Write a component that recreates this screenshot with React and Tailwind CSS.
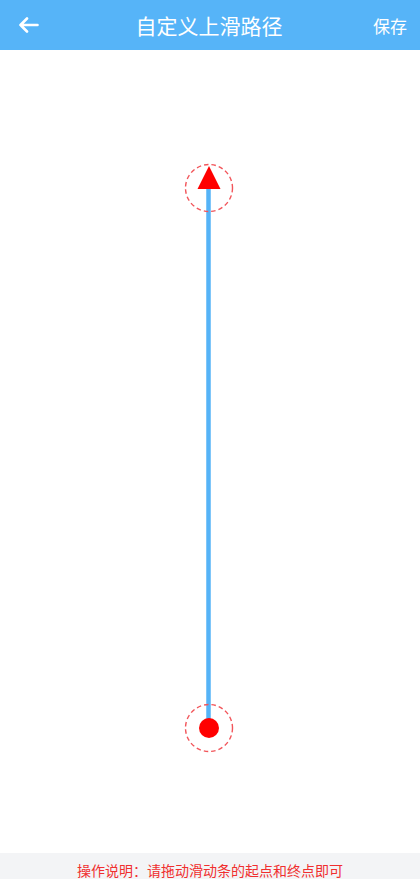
export default function App() {
  const font = { fontFamily: '"Noto Sans CJK SC", "Noto Sans", sans-serif' };
  return (
    <div className="flex h-[879px] w-[420px] flex-col overflow-hidden bg-white" style={font}>
      <div className="flex h-[50px] shrink-0 items-center justify-between bg-[#56b4f8] pl-[18px] pr-[13px] text-white">
        <svg width="21" height="16" viewBox="0 0 21 16" fill="none" stroke="white" strokeWidth="2.6" strokeLinecap="round" strokeLinejoin="round">
          <path d="M19.5 8H2.5M9 1.5L2.5 8L9 14.5" />
        </svg>
        <div className="pl-[6px] text-[21px] leading-none">自定义上滑路径</div>
        <div className="text-[17px] leading-none">保存</div>
      </div>
      <div className="relative flex-1">
        <svg className="absolute left-0 top-0" width="420" height="803" viewBox="0 0 420 803">
          <line x1="208.5" y1="135" x2="208.5" y2="678" stroke="#55b3f7" strokeWidth="4.5" />
          <circle cx="209" cy="138" r="23.5" fill="none" stroke="#f2555a" strokeWidth="1.4" strokeDasharray="4.5 3" />
          <circle cx="209" cy="678" r="23.5" fill="none" stroke="#f2555a" strokeWidth="1.4" strokeDasharray="4.5 3" />
          <polygon points="209,116 220.5,139 197.5,139" fill="#ff0000" />
          <circle cx="209" cy="678" r="10" fill="#ff0000" />
        </svg>
      </div>
      <div className="h-[26px] shrink-0 bg-[#f3f4f6] pt-[8px] text-center text-[14px] leading-[18px] text-[#f02f2f]">
        操作说明：请拖动滑动条的起点和终点即可
      </div>
    </div>
  );
}
